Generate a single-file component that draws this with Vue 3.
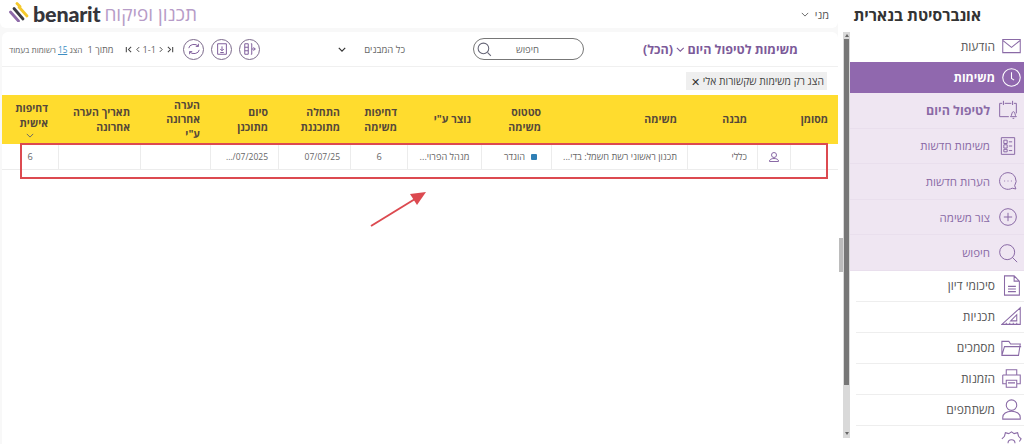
<script setup>
const cols = '48px 33px 70px 136px 70px 74px 57px 72px 68px 70px 82px 56px'
const headers = [
  { t: 'מסומן' }, { t: '' }, { t: 'מבנה' }, { t: 'משימה' }, { t: 'סטטוס משימה' }, { t: 'נוצר ע"י' },
  { t: 'דחיפות משימה' }, { t: 'התחלה מתוכננת' }, { t: 'סיום מתוכנן' }, { t: 'הערה אחרונה ע"י' },
  { t: 'תאריך הערה אחרונה' }, { t: 'דחיפות אישית', sort: true }
]
const nav = [
  { t: 'הודעות', kind: 'plain', icon: ['M2 4h20v15H2zM2 5l10 8 10-8'] },
  { t: 'משימות', kind: 'active', icon: ['M12 2a10 10 0 1 0 0 20 10 10 0 0 0 0-20zM12 6v7l3 2'] },
  { t: 'לטיפול היום', kind: 'sub strong', icon: ['M8 4h8M19 4h3v12M13 20H2V4h3M6.500 1v5M17.500 1v5M15 20c2-1 1-6 3.500-6s1.500 5 3.500 6zM17.500 22h2'] },
  { t: 'משימות חדשות', kind: 'sub', icon: ['M4 2h16v20H4zM7 5h4v4H7zM7 10.500h4v4H7zM7 16h4v3H7zM13 7h4M13 12h4M13 17.500h4'] },
  { t: 'הערות חדשות', kind: 'sub', icon: ['M12 2a10 10 0 1 0 5 18.600l4.500 1-1.500-4A10 10 0 0 0 12 2zM7.500 12h1M11.500 12h1M15.500 12h1'] },
  { t: 'צור משימה', kind: 'sub', icon: ['M12 2a10 10 0 1 0 0 20 10 10 0 0 0 0-20zM12 7v10M7 12h10'] },
  { t: 'חיפוש', kind: 'sub', icon: ['M11 2a9 9 0 1 0 0 18 9 9 0 0 0 0-18zM17 17l6 6'] },
  { t: 'סיכומי דיון', kind: 'plain line', icon: ['M4 1h11l6 6v16H4zM15 1v6h6M8 13h9M8 16h9M8 19h9'] },
  { t: 'תכניות', kind: 'plain line', icon: ['M22 2v19H1zM18 10v7h-7zM6 21v-2M10 21v-2M14 21v-2M18 21v-2'] },
  { t: 'מסמכים', kind: 'plain line', icon: ['M1 5h8l2 3h11l-2 13H1zM1 21l3-10h19'] },
  { t: 'הזמנות', kind: 'plain line', icon: ['M6 8V2h12v6M2 8h20v10h-4M6 18H2V8M6 14h12v8H6zM8 17h8'] },
  { t: 'משתתפים', kind: 'plain line', icon: ['M12 1a6 6 0 1 0 0 12 6 6 0 0 0 0-12zM2 23v-2c0-4 4-7 10-7s10 3 10 7v2z'] },
  { t: '', kind: 'plain', icon: ['M9 3l3-2 3 2 4-1 1 4 3 3-2 3M1 9l3-3 1-4 4 1M8 14a4 4 0 0 1 8 0'] }
]
</script>

<template>
  <div class="app" dir="rtl">
    <aside class="side">
      <h1 class="brand">אונברסיטת בנארית</h1>
      <nav class="nav">
        <a v-for="(n, i) in nav" :key="i" class="item" :class="n.kind">
          <svg class="ico" viewBox="0 0 24 24"><path v-for="d in n.icon" :key="d" :d="d" /></svg>
          <span>{{ n.t }}</span>
        </a>
      </nav>
    </aside>

    <div class="bars">
      <div class="track">
        <i class="tri up"></i>
        <div class="thumb-dark"></div>
        <i class="tri down"></i>
      </div>
      <div class="lane"><div class="thumb-light"></div></div>
    </div>

    <main class="main">
      <header class="top">
        <div class="user">מני
          <svg class="chev" viewBox="0 0 10 6"><path d="M1 1l4 4 4-4" /></svg>
        </div>
        <div class="logo">
          <span class="product">תכנון ופיקוח</span>
          <span class="word" dir="ltr">benarit</span>
          <svg class="mark" viewBox="0 0 20 20">
            <path d="M1.500 10l8 9" stroke="#8d6aa8" />
            <path d="M5 6.500l9 10.500" stroke="#3c3c44" />
            <path d="M10 5l8 9" stroke="#f5c92c" />
            <path d="M8 1.500l3 3" stroke="#f5c92c" />
          </svg>
        </div>
      </header>

      <section class="card">
        <div class="toolbar">
          <h2 class="title">משימות לטיפול היום
            <svg class="chev big" viewBox="0 0 10 6"><path d="M1 1l4 4 4-4" /></svg>
            (הכל)</h2>
          <div class="search">
            <span>חיפוש</span>
            <svg viewBox="0 0 16 16" class="glass"><path d="M7 2a5 5 0 1 0 0 10A5 5 0 0 0 7 2zM11 11l3 3" /></svg>
          </div>
          <div class="filter">
            <span>כל המבנים</span>
            <svg class="chev dark" viewBox="0 0 10 6"><path d="M1 1l4 4 4-4" /></svg>
          </div>
          <div class="actions">
            <button class="round"><svg viewBox="0 0 16 16"><path d="M2 2h4v12H2zM2 6h4M2 10h4M9 2h1v12H9M14 8H10M12 6l2 2-2 2" /></svg></button>
            <button class="round"><svg viewBox="0 0 16 16"><path d="M3 2h10v12H3zM8 5v5M6 8l2 2 2-2M6 12h4" /></svg></button>
            <button class="round"><svg viewBox="0 0 16 16"><path d="M2 7a6 5 0 0 1 11-2M14 9a6 5 0 0 1-11 2M13 2v3h-3M3 14v-3h3" /></svg></button>
          </div>
          <div class="pager">
            <svg class="pg" viewBox="0 0 8 8"><path d="M1 1l3 3-3 3M6.500 1v6" /></svg>
            <svg class="pg one" viewBox="0 0 5 8"><path d="M1 1l3 3-3 3" /></svg>
            <span dir="ltr" class="range">1-1</span>
            <svg class="pg one" viewBox="0 0 5 8"><path d="M4 1L1 4l3 3" /></svg>
            <svg class="pg" viewBox="0 0 8 8"><path d="M7 1L4 4l3 3M1.500 1v6" /></svg>
            <span class="of">מתוך 1</span>
            <span class="size">הצג <u>15</u> רשומות בעמוד</span>
          </div>
        </div>

        <div class="chips">
          <div class="chip">הצג רק משימות שקשורות אלי <span class="x">✕</span></div>
        </div>

        <div class="grid head" :style="{ gridTemplateColumns: cols }">
          <div v-for="(h, i) in headers" :key="i" class="th">
            <span>{{ h.t }}</span>
            <svg v-if="h.sort" class="chev sort" viewBox="0 0 10 6"><path d="M1 1l4 4 4-4" /></svg>
          </div>
        </div>

        <div class="grid row" :style="{ gridTemplateColumns: cols }">
          <div class="td"></div>
          <div class="td center">
            <svg class="person" viewBox="0 0 24 24"><path d="M12 3a5 5 0 1 0 0 10 5 5 0 0 0 0-10zM3 21v-1c0-3 4-5 9-5s9 2 9 5v1z" /></svg>
          </div>
          <div class="td">כללי</div>
          <div class="td">תכנון ראשוני רשת חשמל: בדי...</div>
          <div class="td center status"><i class="dot"></i>הוגדר</div>
          <div class="td center">מנהל הפרוי...</div>
          <div class="td center">6</div>
          <div class="td num">07/07/25</div>
          <div class="td num"><span dir="ltr">.../07/2025</span></div>
          <div class="td"></div>
          <div class="td"></div>
          <div class="td center">6</div>
        </div>

        <div class="mark-box"></div>
        <svg class="arrow" viewBox="0 0 60 38">
          <path d="M2 36L46 9" />
          <path class="head-a" d="M57 2L41 4l7 11z" />
        </svg>
      </section>
    </main>
  </div>
</template>

<style>
html, body { margin: 0; background: #fff; }
</style>

<style scoped>
.app {
  width: 1024px; height: 444px; display: flex; overflow: hidden;
  background: #f8f8f8; color: #555;
  font-family: "Open Sans", "Noto Sans", sans-serif;
}
svg { fill: none; stroke: currentColor; display: block; }

/* sidebar */
.side { width: 174px; flex: none; display: flex; flex-direction: column; background: #fff; }
.brand { margin: 0; height: 32px; line-height: 31px; font-size: 15.600px; font-weight: 700; color: #333; padding-right: 43px; white-space: nowrap; }
.nav { display: flex; flex-direction: column; }
.item { display: flex; align-items: center; gap: 6px; padding-right: 2px; font-size: 12px; color: #555; }
.item .ico { width: 21px; height: 21px; stroke: #8a6aa6; stroke-width: 1.2; flex: none; }
.plain { height: 31px; padding-left: 6px; }
.plain.line { height: 31px; box-sizing: border-box; border-bottom: 1px solid #eee; margin-left: 6px; padding-left: 0; }
.active { height: 31px; background: #9068ae; color: #fff; font-weight: 700; }
.active .ico { stroke: #fff; }
.sub { height: 35.600px; box-sizing: border-box; background: #efe6f2; color: #8a6aa6; border-bottom: 1px solid #e9dfed; padding-right: 6px; gap: 8px; font-size: 11.500px; }
.sub .ico { width: 20px; height: 20px; }
.strong { font-weight: 700; font-size: 12.500px; }

/* scroll bars */
.bars { width: 12px; flex: none; display: flex; background: #fff; }
.lane { width: 5px; }
.thumb-light { margin-top: 238px; width: 4px; height: 34px; background: #bcbcbc; }
.track { width: 7px; background: #d9d9d9; margin-top: 32px; height: 406px; display: flex; flex-direction: column; align-items: center; }
.thumb-dark { width: 5px; height: 346px; margin-top: 2px; background: #777; }
.tri { display: block; width: 0; height: 0; border-left: 2px solid transparent; border-right: 2px solid transparent; }
.tri.up { border-bottom: 3px solid #666; margin-top: 2px; }
.tri.down { border-top: 3px solid #666; margin-top: auto; margin-bottom: 3px; }

/* main */
.main { flex: 1; display: flex; flex-direction: column; min-width: 0; }
.top { height: 28px; flex: none; background: #fff; display: flex; align-items: center; justify-content: space-between; margin-bottom: 4px; padding-left: 9px; border-radius: 0 0 6px 6px; }
.user { display: flex; align-items: center; gap: 6px; font-size: 11px; color: #555; padding-right: 9px; }
.chev { width: 8px; height: 5px; stroke: #666; stroke-width: 1.2; }
.logo { display: flex; align-items: center; gap: 4px; }
.product { font-size: 19px; color: #b79cc8; line-height: 28px; }
.word { font-family: Lato, "Open Sans", sans-serif; font-weight: 900; font-size: 21.500px; color: #35353b; letter-spacing: -0.2px; line-height: 28px; }
.mark { width: 20px; height: 20px; stroke-width: 2.8; stroke-linecap: round; margin-top: -4px; }

.card { position: relative; flex: 1; margin-left: 2px; background: #fff; border-radius: 6px 6px 0 0; }
.toolbar { height: 34px; display: flex; align-items: center; border-bottom: 1px solid #f0f0f0; }
.title { margin: 0 40px 0 0; width: 155px; font-size: 12.500px; font-weight: 700; color: #7c5a99; white-space: nowrap; display: flex; align-items: center; gap: 3px; }
.chev.big { width: 12px; height: 7px; stroke: #7c5a99; }
.search { margin-right: 59px; width: 111px; height: 22px; box-sizing: border-box; border: 1px solid #777; border-radius: 11px; display: flex; align-items: center; padding-right: 44px; font-size: 9.500px; color: #666; position: relative; }
.glass { width: 17px; height: 17px; stroke: #667; position: absolute; left: 2px; top: 2px; }
.filter { margin-right: 68px; width: 67px; display: flex; justify-content: space-between; align-items: center; font-size: 9.500px; color: #666; }
.chev.dark { stroke: #333; stroke-width: 1.5; }
.actions { margin-right: 78px; display: flex; gap: 7px; }
.round { width: 21px; height: 21px; padding: 0; border: 1px solid #7c6a8c; border-radius: 50%; background: #fff; color: #7c5a99; display: flex; align-items: center; justify-content: center; }
.round svg { width: 14px; height: 14px; stroke-width: 1.1; }
.pager { margin-right: 9px; display: flex; align-items: center; gap: 4px; font-size: 9.200px; color: #666; white-space: nowrap; }
.pg { width: 7px; height: 7px; stroke: #444; stroke-width: 1.2; }
.pg.one { width: 4px; }
.range { margin: 0 -1px; }
.of { margin: 0 7px 0 1px; }
.size { font-size: 8.200px; }
.size u { color: #3d8ec4; }

.chips { height: 28px; display: flex; align-items: center; padding-right: 11px; box-sizing: border-box; }
.chip { width: 141px; height: 18px; box-sizing: border-box; background: #efefef; font-size: 10.300px; color: #444; display: flex; align-items: center; justify-content: space-between; padding: 0 3px 0 5px; white-space: nowrap; }
.x { font-size: 11px; color: #333; }

.grid { display: grid; }
.head { background: #ffdc2e; height: 49px; }
.th { display: flex; flex-direction: column; justify-content: center; align-items: flex-start; padding: 0 10px; font-size: 10.500px; font-weight: 700; color: #55483a; line-height: 14.500px; }
.chev.sort { align-self: center; margin-top: 3px; }
.row { height: 25px; border-bottom: 1px solid #ececec; }
.td { display: flex; align-items: center; padding: 0 10px; border-left: 1px solid #ececec; font-size: 9.200px; color: #666; white-space: nowrap; overflow: hidden; min-width: 0; }
.td:last-child { border-left: 0; }
.num { font-size: 8.500px; }
.center { justify-content: center; padding: 0; }
.status { gap: 6px; padding-left: 8px; }
.dot { width: 6px; height: 6px; border-radius: 1px; background: #2f7fb5; }
.person { width: 12px; height: 12px; stroke: #8a6aa6; stroke-width: 2; }

.mark-box { position: absolute; left: 18px; top: 111px; width: 808px; height: 36px; box-sizing: border-box; border: 2px solid #dc4a50; }
.arrow { position: absolute; left: 367px; top: 158px; width: 60px; height: 38px; stroke: #dc4a50; stroke-width: 2; }
.head-a { fill: #dc4a50; stroke: none; }
</style>
